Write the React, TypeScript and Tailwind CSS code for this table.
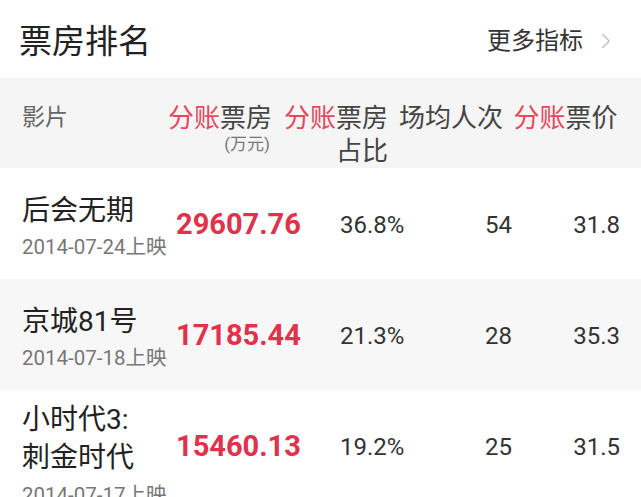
import { ChevronRight } from 'lucide-react'

type Film = { name: string[]; date: string; gross: string; share: string; people: string; price: string; shade: boolean; tall?: boolean }

const films: Film[] = [
  { name: ['后会无期'], date: '2014-07-24上映', gross: '29607.76', share: '36.8%', people: '54', price: '31.8', shade: false },
  { name: ['京城81号'], date: '2014-07-18上映', gross: '17185.44', share: '21.3%', people: '28', price: '35.3', shade: true },
  { name: ['小时代3:', '刺金时代'], date: '2014-07-17上映', gross: '15460.13', share: '19.2%', people: '25', price: '31.5', shade: false, tall: true },
]

const font = { fontFamily: 'Roboto, "Noto Sans CJK SC", sans-serif' }

function Label({ red, rest }: { red?: string; rest: string }) {
  return (
    <span className="whitespace-nowrap">
      {red && <span className="text-[#e8475d]">{red}</span>}
      {rest}
    </span>
  )
}

export default function App() {
  return (
    <div className="w-[641px] h-[497px] overflow-hidden bg-white text-[#333]" style={font}>
      {/* title */}
      <div className="h-[78px] flex items-center justify-between pl-[19px] pr-[22px]">
        <h1 className="text-[33px] leading-none text-[#222] pt-[4px]">票房排名</h1>
        <div className="flex items-center gap-[10px] text-[24px] text-[#333] pt-[4px]">
          更多指标
          <ChevronRight size={26} strokeWidth={1.5} className="text-[#c4c4c4]" />
        </div>
      </div>

      {/* header */}
      <div className="h-[90px] bg-[#f5f5f5] flex pl-[22px] pt-[24px] text-[26px] leading-[32px] text-[#444]">
        <div className="w-[144px] text-[23px] text-[#666]">影片</div>
        <div className="w-[106px] flex flex-col items-end">
          <Label red="分账" rest="票房" />
          <span className="text-[17px] leading-[20px] text-[#777] pr-[2px]">(万元)</span>
        </div>
        <div className="w-[106px] ml-[10px] flex flex-col items-end">
          <Label red="分账" rest="票房" />
          <span className="leading-[34px]">占比</span>
        </div>
        <div className="w-[106px] ml-[10px] text-center">场均人次</div>
        <div className="w-[107px] ml-[8px] text-center">
          <Label red="分账" rest="票价" />
        </div>
      </div>

      {/* rows */}
      {films.map(f => (
        <div key={f.date} className={`flex items-start pl-[22px] ${f.shade ? 'bg-[#f7f7f7]' : 'bg-white'} ${f.tall ? 'h-[130px]' : 'h-[111px]'}`}>
          <div className={`w-[154px] ${f.tall ? 'pt-[11px]' : 'pt-[25px]'}`}>
            {f.name.map(n => (
              <div key={n} className={`text-[28px] text-[#222] whitespace-nowrap ${f.tall ? 'leading-[38px]' : 'leading-[36px]'}`}>{n}</div>
            ))}
            <div className="text-[20.5px] leading-[36px] text-[#777] whitespace-nowrap">{f.date}</div>
          </div>
          <div className="h-[111px] flex items-center pt-[3px]">
            <div className="w-[164px] text-[29px] font-bold text-[#e0324b]">{f.gross}</div>
            <div className="w-[110px] text-[24px]">{f.share}</div>
            <div className="w-[62px] text-[24px] text-right">{f.people}</div>
            <div className="w-[108px] text-[24px] text-right">{f.price}</div>
          </div>
        </div>
      ))}
    </div>
  )
}
